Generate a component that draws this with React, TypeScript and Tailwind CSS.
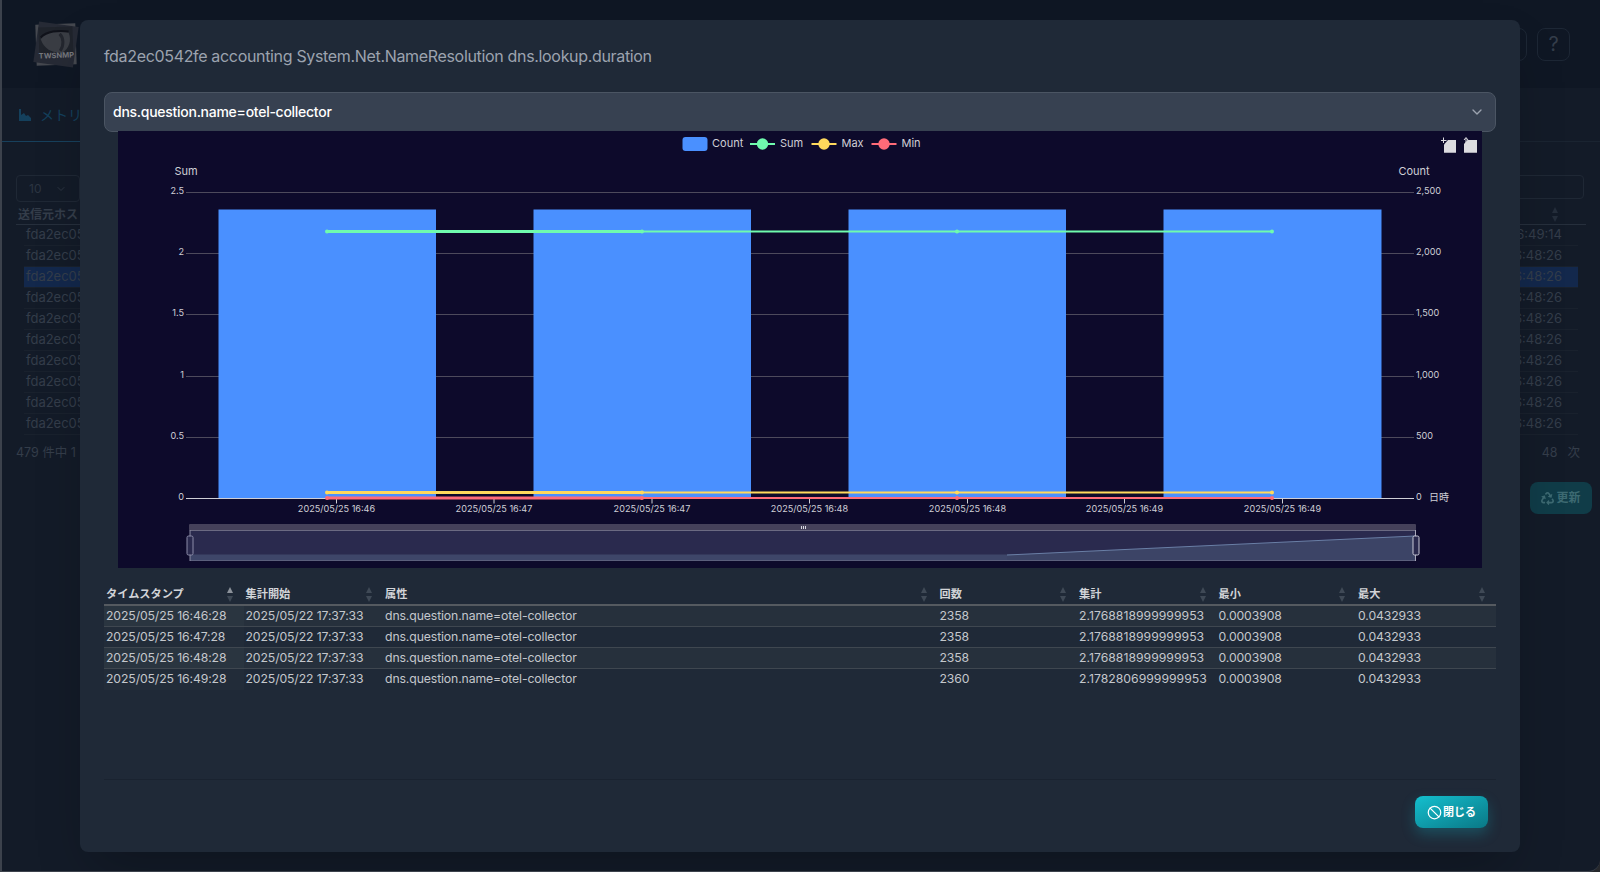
import { Ban, ChevronDown } from "lucide-react";
import { FaRecycle } from "react-icons/fa";

const rowsBehind = [
  "6:49:14", "6:48:26", "6:48:26", "6:48:26", "6:48:26", "6:48:26", "6:48:26", "6:48:26", "6:48:26", "6:48:26",
];

const columns = [
  { label: "タイムスタンプ", active: true },
  { label: "集計開始" },
  { label: "属性" },
  { label: "回数" },
  { label: "集計" },
  { label: "最小" },
  { label: "最大" },
];

const rows = [
  ["2025/05/25 16:46:28", "2025/05/22 17:37:33", "dns.question.name=otel-collector", "2358", "2.1768818999999953", "0.0003908", "0.0432933"],
  ["2025/05/25 16:47:28", "2025/05/22 17:37:33", "dns.question.name=otel-collector", "2358", "2.1768818999999953", "0.0003908", "0.0432933"],
  ["2025/05/25 16:48:28", "2025/05/22 17:37:33", "dns.question.name=otel-collector", "2358", "2.1768818999999953", "0.0003908", "0.0432933"],
  ["2025/05/25 16:49:28", "2025/05/22 17:37:33", "dns.question.name=otel-collector", "2360", "2.1782806999999953", "0.0003908", "0.0432933"],
];

const gridTemplate = "grid grid-cols-[139.5px_139.5px_554.5px_139.5px_139.5px_139.5px_140px]";

const yTicks = [
  { y: 498.5, left: "0", right: "0" },
  { y: 437.5, left: "0.5", right: "500" },
  { y: 376.5, left: "1", right: "1,000" },
  { y: 314.5, left: "1.5", right: "1,500" },
  { y: 253.5, left: "2", right: "2,000" },
  { y: 192.5, left: "2.5", right: "2,500" },
];

const bars = [
  [218.5, 217.5],
  [533.5, 217.5],
  [848.5, 217.5],
  [1163.5, 218],
];

const xTicks = [
  { x: 336.5, label: "2025/05/25 16:46" },
  { x: 494, label: "2025/05/25 16:47" },
  { x: 652, label: "2025/05/25 16:47" },
  { x: 809.5, label: "2025/05/25 16:48" },
  { x: 967.5, label: "2025/05/25 16:48" },
  { x: 1124.5, label: "2025/05/25 16:49" },
  { x: 1282.5, label: "2025/05/25 16:49" },
];

const points = [327, 642, 957, 1272];

const series = [
  { y: 231.5, color: "#6ffbae" },
  { y: 492.5, color: "#ffd95c" },
  { y: 498, color: "#ff6b78" },
];

function Chart() {
  return (
    <svg viewBox="118 131 1364 437" className="block h-[437px] w-[1364px] bg-[#0d0a2b]" fontFamily="Inter, sans-serif">
      {/* legend */}
      <rect x="682.5" y="137" width="25" height="14" rx="3" fill="#4a90ff" />
      <text x="712" y="147" fontSize="11" fill="#cfcfd6">Count</text>
      {[
        { c: 762.5, color: "#6ffbae", label: "Sum", tx: 780 },
        { c: 824, color: "#ffd95c", label: "Max", tx: 841.5 },
        { c: 884, color: "#ff6b78", label: "Min", tx: 901.5 },
      ].map((l) => (
        <g key={l.label}>
          <line x1={l.c - 12.5} x2={l.c + 12.5} y1="144" y2="144" stroke={l.color} strokeWidth="2" />
          <circle cx={l.c} cy="144" r="5.7" fill={l.color} />
          <text x={l.tx} y="147" fontSize="11" fill="#cfcfd6">{l.label}</text>
        </g>
      ))}

      {/* toolbox */}
      <path d="M1448 140H1456V152.7H1444V144.5Z" fill="#dcdce0" />
      <path d="M1443.5 137.5V143M1441 140.5H1446.5" stroke="#dcdce0" strokeWidth="1" />
      <path d="M1467.5 140H1477V152.7H1464V144Z" fill="#dcdce0" />
      <path d="M1466 143.5V138M1464 140L1466 137.5L1468 140" stroke="#dcdce0" strokeWidth="1" fill="none" />

      {/* axis names */}
      <text x="186" y="175" fontSize="11" textAnchor="middle" fill="#cfcfd6">Sum</text>
      <text x="1414" y="175" fontSize="11" textAnchor="middle" fill="#cfcfd6">Count</text>

      {/* grid */}
      {yTicks.map((t) => (
        <g key={t.y}>
          {t.left !== "0" && <line x1="186" x2="1414" y1={t.y} y2={t.y} stroke="#4d4a5c" strokeWidth="1" />}
          <text x="184" y={t.y + 1.5} fontSize="9.1" textAnchor="end" fill="#cfcfd6">{t.left}</text>
          <text x="1416" y={t.y + 1.5} fontSize="9.1" fill="#cfcfd6">{t.right}</text>
        </g>
      ))}

      {/* bars */}
      {bars.map(([x, w]) => (
        <rect key={x} x={x} y="209.5" width={w} height="289" fill="#4a90ff" />
      ))}

      <line x1="186" x2="1414" y1="498.5" y2="498.5" stroke="#cfcfd6" strokeWidth="1" />
      {xTicks.map((t) => (
        <g key={t.x}>
          <line x1={t.x} x2={t.x} y1="498.5" y2="503.5" stroke="#cfcfd6" strokeWidth="1" />
          <text x={t.x} y="512" fontSize="9.1" textAnchor="middle" fill="#cfcfd6">{t.label}</text>
        </g>
      ))}
      <text x="1429" y="501" fontSize="10" fontFamily="'Noto Sans CJK JP', sans-serif" fill="#cfcfd6">日時</text>

      {/* series: the first segment is drawn heavier than the rest */}
      {series.map((s) => (
        <g key={s.y}>
          <line x1="327" x2="642" y1={s.y} y2={s.y} stroke={s.color} strokeWidth="2.8" />
          <line x1="642" x2="1272" y1={s.y} y2={s.y} stroke={s.color} strokeWidth="1.8" />
          {points.map((x) => (
            <circle key={x} cx={x} cy={s.y} r="2" fill={s.color} />
          ))}
        </g>
      ))}

      {/* data zoom */}
      <rect x="189" y="524" width="1227" height="6.5" rx="1" fill="#45415a" />
      <rect x="190" y="530.5" width="1226" height="30" fill="#2a2a4e" />
      <rect x="190" y="554.5" width="1226" height="6" fill="#3e4669" />
      <path d="M1007 555L1415 536V560.5H1007Z" fill="#3c4466" />
      <path d="M1007 555L1415 536" stroke="#6a7fa6" strokeWidth="1" fill="none" />
      <line x1="190" x2="1416" y1="530.5" y2="530.5" stroke="#6b6a82" strokeWidth="1" />
      <line x1="190" x2="1416" y1="560.5" y2="560.5" stroke="#5b5f7c" strokeWidth="1" />
      <line x1="190" x2="190" y1="530" y2="561" stroke="#8b8ba3" strokeWidth="1" />
      <line x1="1415.5" x2="1415.5" y1="530" y2="561" stroke="#a8a8bb" strokeWidth="1" />
      <path d="M801.5 526V529M803.5 526V529M805.5 526V529" stroke="#d8d8e0" strokeWidth="1" />
      <rect x="187" y="536" width="6" height="19" rx="1.5" fill="#2a2a4e" stroke="#8b8ba8" strokeWidth="1" />
      <rect x="1413" y="536" width="6" height="19" rx="1.5" fill="#2a2a4e" stroke="#c8c8d6" strokeWidth="1" />
    </svg>
  );
}

function SortArrows({ up = "#3f4956", down = "#3f4956" }: { up?: string; down?: string }) {
  return (
    <svg width="6" height="15" viewBox="0 0 6 15" className="shrink-0">
      <path d="M3 0L6 6H0Z" fill={up} />
      <path d="M3 15L0 9H6Z" fill={down} />
    </svg>
  );
}

function MetricTable() {
  return (
    <div className="mt-[17px] text-[12.25px] tracking-[-0.12px] text-[#c4c7cc]">
      <div className={`${gridTemplate} h-[21px] border-b-2 border-[#555a60]`}>
        {columns.map((c) => (
          <div key={c.label} className="flex items-center justify-between pl-[2px] pr-[11px] text-[11.2px] font-bold tracking-normal text-[#d2d4d8]">
            <span>{c.label}</span>
            <SortArrows up={c.active ? "#8c929b" : undefined} />
          </div>
        ))}
      </div>
      {rows.map((row, i) => (
        <div key={i} className={`${gridTemplate} h-[21px] border-b border-[#3f4750] ${i % 2 === 0 ? "bg-[#26303c]" : ""} last:border-b-0`}>
          {row.map((cell, j) => (
            <div key={j} className={`flex items-center whitespace-nowrap pl-[2px] ${j === 4 ? "tracking-normal" : ""} ${j === 0 ? (i % 2 === 0 ? "bg-[#2a3540]" : "bg-[#222c39]") : ""}`}>
              {cell}
            </div>
          ))}
        </div>
      ))}
    </div>
  );
}

function MetricModal() {
  return (
    <div className="absolute left-[78px] top-[20px] flex h-[832px] w-[1440px] flex-col rounded-lg bg-[#1f2937] shadow-2xl">
      <div className="flex-1 px-6">
        <div className="flex h-[72px] items-center text-base tracking-[-0.33px] text-[#9ca3af]">
          fda2ec0542fe accounting System.Net.NameResolution dns.lookup.duration
        </div>
        <div className="flex h-[40px] items-center justify-between rounded-lg border border-[#4b5563] bg-[#374151] pl-2 pr-[10px] text-sm font-medium tracking-[-0.27px] text-white">
          <span>dns.question.name=otel-collector</span>
          <ChevronDown size={16} className="text-[#9ca3af]" />
        </div>
        <div className="mx-[14px] -mt-[1px]">
          <Chart />
        </div>
        <MetricTable />
      </div>
      <div className="mx-6 flex h-[73px] items-start justify-end border-t border-[#1a2330] pr-2 pt-[16px]">
        <button className="flex h-[32px] w-[73px] items-center justify-center rounded-lg bg-gradient-to-br from-[#14c0cf] to-[#0a7886] text-[11px] font-bold text-white shadow-[0_6px_14px_rgba(20,170,190,0.3)]">
          <Ban size={15} strokeWidth={2} className="mr-[1px]" />
          閉じる
        </button>
      </div>
    </div>
  );
}

function Logo() {
  return (
    <div className="relative h-[41px] w-[40px] rotate-[-2deg] bg-[#45484f]">
      <div className="absolute inset-0 -z-10 rotate-[10deg] bg-[#262a35]" />
      <svg viewBox="0 0 40 41" className="h-[41px] w-[40px]">
        <rect x="3" y="3" width="34" height="27" fill="#1f232b" />
        <path d="M5 15C8 7 22 5 33 9C36 17 33 25 26 29C16 29 8 25 5 15Z" fill="#3a3d44" />
        <path d="M5 13C11 7 23 6 33 8" stroke="#10121a" strokeWidth="2" fill="none" />
        <path d="M24 10C28 14 28 22 24 27" stroke="#23262e" strokeWidth="3" fill="none" />
      </svg>
      <span className="absolute inset-x-0 bottom-[4px] text-center text-[7.5px] font-bold text-[#75777d]">TWSNMP</span>
    </div>
  );
}

export default function App() {
  return (
    <div className="h-[872px] w-[1600px] bg-[#26282c]">
      <div className="relative h-[872px] w-[1600px] overflow-hidden rounded-br-[12px] border-b border-l-2 border-[#3c424c] bg-[#131b28] text-[#343d4a] [font-family:Inter,'Noto_Sans_CJK_JP',sans-serif]">
        <div className="flex h-[88px] items-center justify-between bg-[#0f1724] pl-[34px] pr-[30px]">
          <Logo />
          <div className="flex gap-[10px]">
            <div className="h-[33px] w-[40px] rounded-lg border border-[#1d2735]" />
            <div className="flex h-[33px] w-[33px] items-center justify-center rounded-lg border border-[#1d2735] text-xl">?</div>
          </div>
        </div>
        <div className="flex h-[54px] border-b border-[#1a2431]">
          <div className="flex h-[54px] w-[190px] items-center gap-2 border-b border-[#17405c] pl-[16px] text-sm text-[#14405c]">
            <svg width="14" height="14" viewBox="0 0 14 14" fill="currentColor">
              <path d="M1 1H3V7L6 5L8 8L10 7L13 10V13H1Z" />
            </svg>
            メトリクス
          </div>
        </div>
        <div className="px-[14px] pt-[33px] text-xs">
          <div className="flex justify-between">
            <div className="flex h-[27px] w-[64px] items-center justify-between rounded border border-[#1f2835] px-3 text-[#2c3542]">
              10
              <ChevronDown size={12} />
            </div>
            <div className="mr-[2px] h-[24px] w-[200px] rounded border border-[#1f2835]" />
          </div>
          <div className="mt-[3px] flex h-[20px] items-center justify-between border-b border-[#262f3c] pl-[2px] pr-[28px] font-bold">
            送信元ホスト
            <SortArrows up="#252e3b" down="#252e3b" />
          </div>
          <div className="px-[8px]">
            {rowsBehind.map((t, i) => (
              <div key={i} className={`flex h-[21px] items-center justify-between border-b border-[#19212d] pl-[2px] pr-[16px] text-[13px] ${i === 2 ? "bg-[#13284c]" : ""}`}>
                <span>fda2ec0542fe</span>
                <span>2025/05/25 1{t}</span>
              </div>
            ))}
          </div>
          <div className="mt-[8px] flex h-[20px] items-center justify-between pr-[6px] text-[12.5px]">
            <span>479 件中 1 から 10 まで</span>
            <span className="flex gap-[10px]"><span>48</span><span>次</span></span>
          </div>
          <div className="mt-[19px] flex justify-end gap-[10px]">
            <div className="h-[32px] w-[72px] rounded-lg bg-[#3a1a24]" />
            <div className="-mr-[6px] flex h-[32px] w-[62px] items-center justify-center gap-[2px] rounded-lg bg-[#103c48] text-xs font-bold text-[#3d6a72]">
              <FaRecycle size={13} />
              更新
            </div>
          </div>
        </div>
        <MetricModal />
      </div>
    </div>
  );
}
